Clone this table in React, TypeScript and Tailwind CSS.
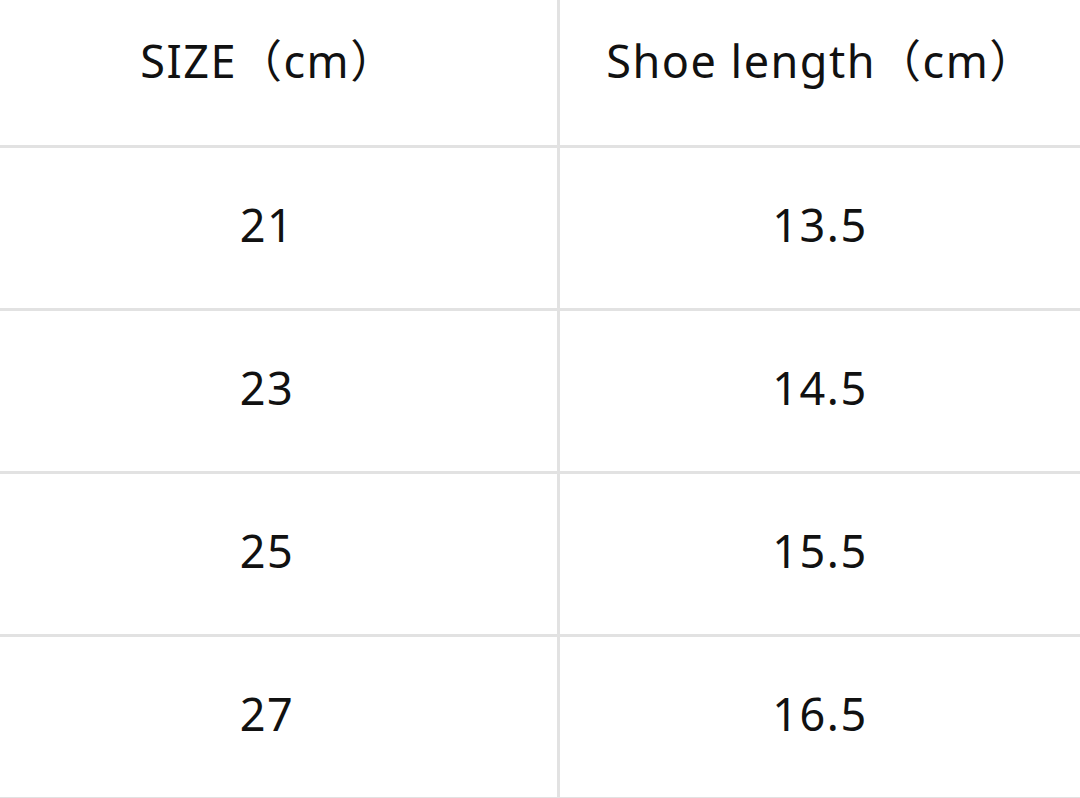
export default function App() {
  const rows = [
    ["21", "13.5"],
    ["23", "14.5"],
    ["25", "15.5"],
    ["27", "16.5"],
  ];
  const font = { fontFamily: '"Noto Sans", "Noto Sans CJK SC", sans-serif' };
  return (
    <div className="w-[1080px] h-[798px] overflow-hidden bg-white text-[#111]" style={font}>
      <div className="flex h-[148px] border-b-[3px] border-[#e2e2e2]">
        <div className="w-[560px] border-r-[3px] border-[#e2e2e2] flex items-center justify-center pr-[20px] pb-[24px] text-[45px] tracking-[1.5px] leading-none">
          SIZE（cm）
        </div>
        <div className="flex-1 flex items-center justify-center pl-[2px] pb-[24px] text-[45px] tracking-[1.5px] leading-none">
          Shoe length（cm）
        </div>
      </div>
      {rows.map(([a, b], i) => (
        <div key={i} className="flex h-[163px] border-b-[3px] border-[#e2e2e2]">
          <div className="w-[560px] border-r-[3px] border-[#e2e2e2] flex items-center justify-center pr-[23px] pb-[8px] text-[45px] tracking-[1.5px] leading-none">
            {a}
          </div>
          <div className="flex-1 flex items-center justify-center pb-[8px] text-[45px] tracking-[1.5px] leading-none">
            {b}
          </div>
        </div>
      ))}
    </div>
  );
}
